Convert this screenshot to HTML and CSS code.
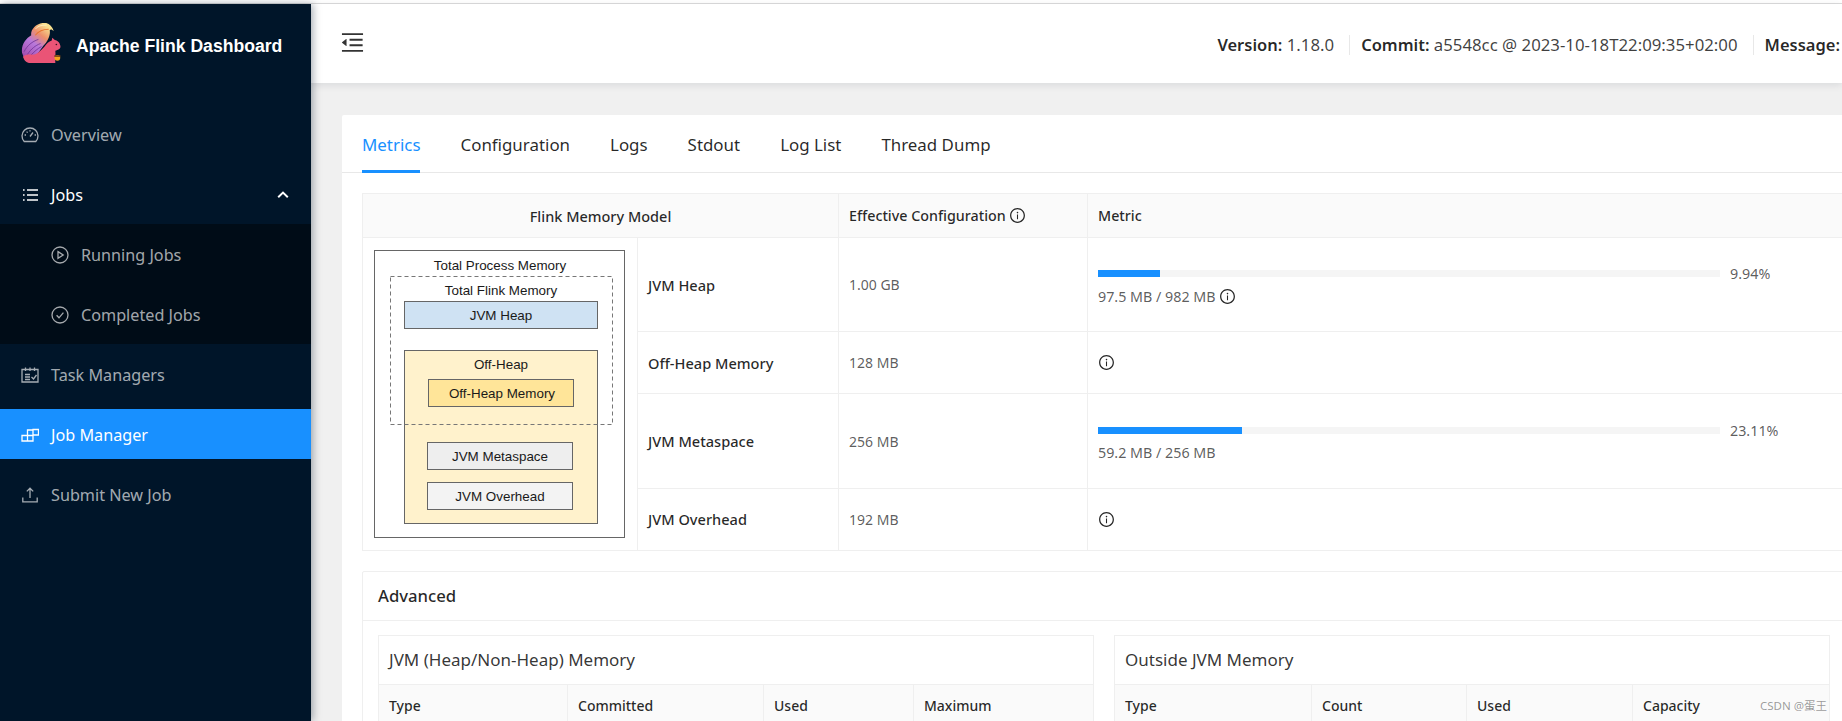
FILE: index.html
```html
<!DOCTYPE html>
<html lang="en">
<head>
  <meta charset="UTF-8">
  <title>Apache Flink Dashboard</title>
  <link rel="stylesheet" href="styles.css">
</head>
<body>

  <svg class="icon-defs" width="0" height="0">
    <symbol id="info" viewBox="0 0 1024 1024">
      <path d="M512 64C264.6 64 64 264.6 64 512s200.6 448 448 448 448-200.6 448-448S759.4 64 512 64zm0 820c-205.4 0-372-166.6-372-372s166.6-372 372-372 372 166.6 372 372-166.6 372-372 372z"/>
      <path d="M464 336a48 48 0 1 0 96 0 48 48 0 1 0-96 0zm72 112h-48c-4.4 0-8 3.6-8 8v272c0 4.4 3.6 8 8 8h48c4.4 0 8-3.6 8-8V456c0-4.4-3.6-8-8-8z"/>
    </symbol>
  </svg>

  <div class="topline"></div>

  <div class="layout">
    <aside class="sider">
      <div class="logo">
        <svg class="logo-img" viewBox="22 23 40 40">
          <defs>
            <linearGradient id="tail" x1="0" y1="1" x2="0.65" y2="0">
              <stop offset="0" stop-color="#9c3f9e"/>
              <stop offset="0.5" stop-color="#b878dc"/>
              <stop offset="0.75" stop-color="#ee8f6a"/>
              <stop offset="1" stop-color="#f8e08e"/>
            </linearGradient>
          </defs>
          <path fill="url(#tail)" d="M23 52C22 44 27 38 32 35C31 30 36 24 43 23C48 22 52 25 54 31C52 29 51 29 50 30C51 35 48 41 44 45L36 56L26 60Z"/>
          <path fill="none" stroke="#6f3296" stroke-width="0.8" d="M25 51C28 45 33 41 39 39M28 54C32 48 36 45 41 43M31 55C35 51 38 48 42 46"/>
          <path fill="none" stroke="#e8742e" stroke-width="1" d="M36 35C39 31 43 29 49 29"/>
          <path fill="none" stroke="#fff4c8" stroke-width="0.8" d="M36 29C38 26 42 25 47 25"/>
          <path fill="#ea5476" d="M24 56C27 53 31 54 34 54C39 53 42 49 45 46C47 43 49 41 52 40L52.5 37.5L55 39.5C58 40 60.5 43 60.5 46C60.5 48.5 58 49.5 55.5 50C56 53 55 58 55.5 62H30C27 62 25 59 24 56Z"/>
          <circle cx="57.5" cy="57" r="2.8" fill="#f2a31c"/>
          <path fill="#6b3a1a" d="M54.5 54.5h6v1.5h-6z"/>
          <circle cx="56.5" cy="44" r="0.8" fill="#3a1020"/>
        </svg>
        <span class="logo-title">Apache Flink Dashboard</span>
      </div>

      <ul class="menu">
        <li class="menu-item">
          <svg class="menu-icon" viewBox="0 0 18 18"><path d="M3.2 15.5a8 8 0 1 1 11.6 0zM9 10.5l3-4M5 9H3.6M15 9h-1.4M9 4.2v1.3M5.6 5.6l1 1"/></svg>
          Overview
        </li>
        <li class="menu-item is-open">
          <svg class="menu-icon" viewBox="0 0 18 18"><path d="M6 4h11M6 9h11M6 14h11M2 4h1.6M2 9h1.6M2 14h1.6"/></svg>
          Jobs
          <svg class="menu-arrow" viewBox="0 0 12 8"><path d="M1.2 6.2L6 1.6l4.8 4.6"/></svg>
        </li>
        <ul class="submenu">
          <li class="menu-item">
            <svg class="menu-icon" viewBox="0 0 18 18"><circle cx="9" cy="9" r="8"/><path d="M7 5.6L12.2 9 7 12.4z"/></svg>
            Running Jobs
          </li>
          <li class="menu-item">
            <svg class="menu-icon" viewBox="0 0 18 18"><circle cx="9" cy="9" r="8"/><path d="M5.6 9.2l2.4 2.6 4.4-5.2"/></svg>
            Completed Jobs
          </li>
        </ul>
        <li class="menu-item">
          <svg class="menu-icon" viewBox="0 0 18 18"><path d="M1 3.5h16v12.5H1zM4.5 1.5v3.5M9 1.5v3.5M13.5 1.5v3.5M4 8.5h5M4 11h5M4 13.5h5M10.5 11l2 2 3-4"/></svg>
          Task Managers
        </li>
        <li class="menu-item is-active">
          <svg class="menu-icon" viewBox="0 0 18 18"><path d="M1 9.5h5.5v5.5H1zM6.5 9.5H12v5.5H6.5zM6.5 4H12v5.5H6.5zM12 3.5h5.5V9H12z"/></svg>
          Job Manager
        </li>
        <li class="menu-item">
          <svg class="menu-icon" viewBox="0 0 18 18"><path d="M9 2.5V12M5.8 5.4L9 2.2l3.2 3.2M1.8 11.5v4.3h14.4v-4.3"/></svg>
          Submit New Job
        </li>
      </ul>
    </aside>

    <div class="main">
      <header class="header">
        <svg class="fold-icon" viewBox="0 0 1024 1024"><path d="M408 442h480c4.4 0 8-3.6 8-8v-56c0-4.4-3.6-8-8-8H408c-4.4 0-8 3.6-8 8v56c0 4.4 3.6 8 8 8zm-8 204c0 4.4 3.6 8 8 8h480c4.4 0 8-3.6 8-8v-56c0-4.4-3.6-8-8-8H408c-4.4 0-8 3.6-8 8v56zm504-486H120c-4.4 0-8 3.6-8 8v56c0 4.4 3.6 8 8 8h784c4.4 0 8-3.6 8-8v-56c0-4.4-3.6-8-8-8zm0 632H120c-4.4 0-8 3.6-8 8v56c0 4.4 3.6 8 8 8h784c4.4 0 8-3.6 8-8v-56c0-4.4-3.6-8-8-8zM115.4 518.9L271.7 642c5.8 4.6 14.4.5 14.4-6.9V388.9c0-7.4-8.5-11.5-14.4-6.9L115.4 505.1a8.74 8.74 0 0 0 0 13.8z"/></svg>
        <div class="job-info">
          <span class="info-part"><strong>Version:</strong> 1.18.0</span>
          <span class="info-part"><strong>Commit:</strong> a5548cc @ 2023-10-18T22:09:35+02:00</span>
          <span class="info-part"><strong>Message:</strong></span>
        </div>
      </header>

      <div class="content">
        <section class="card">
          <nav class="tabs">
            <a class="tab is-active">Metrics</a>
            <a class="tab">Configuration</a>
            <a class="tab">Logs</a>
            <a class="tab">Stdout</a>
            <a class="tab">Log List</a>
            <a class="tab">Thread Dump</a>
          </nav>

          <table class="memory-table">
            <colgroup>
              <col class="col-diagram"><col class="col-name"><col class="col-config"><col>
            </colgroup>
            <thead>
              <tr>
                <th colspan="2" class="center">Flink Memory Model</th>
                <th>Effective Configuration <svg class="info-icon"><use href="#info"/></svg></th>
                <th>Metric</th>
              </tr>
            </thead>
            <tbody>
              <tr class="row-tall">
                <td rowspan="4" class="diagram-cell">
                  <svg class="diagram" viewBox="363 238 275 312">
                    <rect x="374.5" y="250.5" width="250" height="287" class="d-outer"/>
                    <text x="500" y="266">Total Process Memory</text>
                    <text x="501" y="291">Total Flink Memory</text>
                    <rect x="404.5" y="301.5" width="193" height="27" fill="#cfe2f3" class="d-box"/>
                    <text x="501" y="316">JVM Heap</text>
                    <rect x="404.5" y="350.5" width="193" height="173" fill="#fff2cc" class="d-box"/>
                    <text x="501" y="365">Off-Heap</text>
                    <rect x="428.5" y="379.5" width="145" height="27" fill="#ffe599" class="d-box"/>
                    <text x="502" y="394.5">Off-Heap Memory</text>
                    <rect x="390.5" y="276.5" width="222" height="148" class="d-dashed"/>
                    <rect x="427.5" y="442.5" width="145" height="27" fill="#eeeeee" class="d-box"/>
                    <text x="500" y="457.5">JVM Metaspace</text>
                    <rect x="427.5" y="482.5" width="145" height="27" fill="#f3f3f3" class="d-box"/>
                    <text x="500" y="497.5">JVM Overhead</text>
                  </svg>
                </td>
                <td class="name">JVM Heap</td>
                <td>1.00 GB</td>
                <td class="metric">
                  <div class="progress">
                    <div class="progress-track"><div class="progress-fill" style="width: 9.94%"></div></div>
                    <span>9.94%</span>
                  </div>
                  <div class="usage">97.5 MB / 982 MB <svg class="info-icon"><use href="#info"/></svg></div>
                </td>
              </tr>
              <tr class="row-short">
                <td class="name">Off-Heap Memory</td>
                <td>128 MB</td>
                <td><svg class="info-icon"><use href="#info"/></svg></td>
              </tr>
              <tr class="row-tall">
                <td class="name">JVM Metaspace</td>
                <td>256 MB</td>
                <td class="metric">
                  <div class="progress">
                    <div class="progress-track"><div class="progress-fill" style="width: 23.11%"></div></div>
                    <span>23.11%</span>
                  </div>
                  <div class="usage">59.2 MB / 256 MB</div>
                </td>
              </tr>
              <tr class="row-short">
                <td class="name">JVM Overhead</td>
                <td>192 MB</td>
                <td><svg class="info-icon"><use href="#info"/></svg></td>
              </tr>
            </tbody>
          </table>

          <section class="advanced">
            <h3 class="advanced-title">Advanced</h3>
            <div class="advanced-body">
              <div class="sub-card">
                <h4 class="sub-title">JVM (Heap/Non-Heap) Memory</h4>
                <div class="sub-head sub-head-left">
                  <span>Type</span><span>Committed</span><span>Used</span><span>Maximum</span>
                </div>
              </div>
              <div class="sub-card">
                <h4 class="sub-title">Outside JVM Memory</h4>
                <div class="sub-head sub-head-right">
                  <span>Type</span><span>Count</span><span>Used</span><span>Capacity</span>
                </div>
              </div>
            </div>
          </section>
        </section>
      </div>
    </div>
  </div>

  <div class="watermark">CSDN @蛋王</div>

</body>
</html>
```

FILE: styles.css
```css
html, body {
  margin: 0;
  height: 721px;
  overflow: hidden;
}

body {
  font-family: "Noto Sans", "Noto Sans CJK SC", sans-serif;
  font-size: 14px;
  color: rgba(0, 0, 0, 0.65);
  background: #f0f0f0;
  position: relative;
}

ul, h3, h4 {
  margin: 0;
  padding: 0;
  list-style: none;
}

.icon-defs {
  position: absolute;
}

.topline {
  height: 3px;
  background: #fff;
  border-bottom: 1px solid #dcdcdc;
}

.layout {
  display: flex;
  height: 717px;
}

/* sidebar */
.sider {
  flex: none;
  width: 311px;
  background: #001529;
  box-shadow: 2px 0 8px rgba(0, 21, 41, 0.35);
  position: relative;
  z-index: 2;
}

.logo {
  display: flex;
  align-items: center;
  height: 80px;
  padding-left: 21px;
}

.logo-img {
  width: 41px;
  height: 41px;
  margin-right: 14px;
  margin-top: -2px;
}

.logo-title {
  font-family: "Liberation Sans", sans-serif;
  font-weight: 700;
  font-size: 17.6px;
  color: #fff;
  margin-top: 5px;
}

.menu {
  padding-top: 25px;
}

.menu-item {
  display: flex;
  align-items: center;
  box-sizing: border-box;
  height: 50px;
  margin-bottom: 10px;
  padding-top: 2px;
  padding-left: 21px;
  font-size: 16.2px;
  color: rgba(255, 255, 255, 0.65);
}

.menu-icon {
  flex: none;
  width: 18px;
  height: 18px;
  margin-right: 12px;
  fill: none;
  stroke: currentColor;
  stroke-width: 1.3;
}

.menu-item.is-open {
  color: #fff;
  margin-bottom: 5px;
}

.menu-arrow {
  width: 12px;
  height: 8px;
  margin-left: auto;
  margin-right: 22px;
  fill: none;
  stroke: #fff;
  stroke-width: 2;
}

.menu-item.is-active {
  background: #1890ff;
  color: #fff;
}

.submenu {
  background: #000c17;
  padding: 5px 0;
  margin-bottom: 5px;
}

.submenu .menu-item {
  padding-left: 51px;
}

.submenu .menu-item:last-child {
  margin-bottom: 0;
}

/* header */
.main {
  flex: 1;
  min-width: 0;
}

.header {
  display: flex;
  align-items: center;
  height: 79px;
  background: #fff;
  box-shadow: 0 2px 8px rgba(0, 21, 41, 0.1);
  position: relative;
}

.fold-icon {
  width: 27px;
  height: 27px;
  margin-left: 28px;
  margin-top: -3px;
  fill: #333;
}

.job-info {
  margin-left: auto;
  margin-top: 2px;
  display: flex;
  align-items: center;
  font-size: 16.8px;
  white-space: nowrap;
  color: rgba(0, 0, 0, 0.75);
}

.job-info strong {
  font-size: 16.5px;
  font-weight: 600;
  color: rgba(0, 0, 0, 0.85);
}

.info-part {
  padding: 0 15px 0 11px;
  border-right: 1px solid #e8e8e8;
  line-height: 20px;
}

.info-part:last-child {
  border-right: none;
  padding-right: 2px;
}

/* card and tabs */
.content {
  padding: 32px 0 0 31px;
}

.card {
  width: 1484px;
  padding: 0 20px;
  background: #fff;
  border-radius: 2px;
}

.tabs {
  display: flex;
  gap: 40px;
  height: 58px;
  margin: 0 -20px;
  padding: 0 20px;
  border-bottom: 1px solid #e8e8e8;
  box-sizing: border-box;
}

.tab {
  display: flex;
  align-items: center;
  height: 58px;
  box-sizing: border-box;
  padding-top: 3px;
  border-bottom: 3px solid transparent;
  font-size: 16.9px;
  color: rgba(0, 0, 0, 0.85);
}

.tab.is-active {
  color: #1890ff;
  border-bottom-color: #1890ff;
}

/* memory table */
.memory-table {
  width: 1484px;
  margin-top: 20px;
  border-collapse: collapse;
  table-layout: fixed;
}

.col-diagram { width: 275px; }
.col-name { width: 201px; }
.col-config { width: 249px; }

.memory-table th,
.memory-table td {
  border: 1px solid #efefef;
  padding: 0 10px;
  text-align: left;
}

.memory-table th {
  height: 44px;
  box-sizing: border-box;
  background: #fafafa;
  font-size: 14.3px;
  font-weight: 500;
  color: rgba(0, 0, 0, 0.85);
}

.memory-table th.center {
  font-size: 14.5px;
  text-align: center;
}

.memory-table .name {
  font-size: 14.6px;
  font-weight: 500;
  color: rgba(0, 0, 0, 0.85);
}

.row-tall { height: 94px; }
.row-short { height: 62px; }

.memory-table td.metric {
  padding-top: 1px;
  font-size: 14.3px;
}

.memory-table td.diagram-cell {
  padding: 0;
  line-height: 0;
}

.diagram {
  display: block;
  width: 275px;
  height: 312px;
}

.diagram text {
  font-family: "Liberation Sans", sans-serif;
  font-size: 13.4px;
  fill: #1a1a1a;
  text-anchor: middle;
  dominant-baseline: middle;
}

.d-outer {
  fill: #fff;
  stroke: #666;
}

.d-box {
  stroke: #666;
}

.d-dashed {
  fill: none;
  stroke: #777;
  stroke-dasharray: 4 3;
}

.info-icon {
  display: inline-block;
  width: 17px;
  height: 17px;
  vertical-align: -3px;
  fill: rgba(0, 0, 0, 0.85);
}

.progress {
  display: flex;
  align-items: center;
  height: 22px;
}

.progress-track {
  flex: none;
  width: 622px;
  height: 7px;
  margin-right: 10px;
  background: #f5f5f5;
}

.progress-fill {
  height: 100%;
  background: #1890ff;
}

.usage {
  line-height: 23px;
}

/* advanced section */
.advanced {
  margin-top: 20px;
  border: 1px solid #efefef;
  border-radius: 2px;
}

.advanced-title {
  height: 48px;
  line-height: 48px;
  padding-left: 15px;
  font-size: 16.7px;
  font-weight: 500;
  color: rgba(0, 0, 0, 0.85);
  border-bottom: 1px solid #efefef;
}

.advanced-body {
  display: grid;
  grid-template-columns: 716px 716px;
  gap: 20px;
  padding: 14px 15px;
}

.sub-card {
  border: 1px solid #efefef;
}

.sub-title {
  height: 48px;
  line-height: 48px;
  padding-left: 10px;
  font-size: 17px;
  font-weight: 400;
  color: rgba(0, 0, 0, 0.8);
  border-bottom: 1px solid #efefef;
}

.sub-head {
  display: grid;
  height: 41px;
  background: #fafafa;
  font-weight: 500;
  color: rgba(0, 0, 0, 0.85);
}

.sub-head-left {
  grid-template-columns: 189px 196px 150px 1fr;
}

.sub-head-right {
  grid-template-columns: 197px 155px 166px 1fr;
}

.sub-head span {
  display: flex;
  align-items: center;
  padding-left: 10px;
  border-right: 1px solid #efefef;
}

.sub-head span:last-child {
  border-right: none;
}

.watermark {
  position: absolute;
  left: 1760px;
  top: 698px;
  font-size: 11.5px;
  line-height: 15px;
  color: rgba(0, 0, 0, 0.4);
  z-index: 3;
}
```
